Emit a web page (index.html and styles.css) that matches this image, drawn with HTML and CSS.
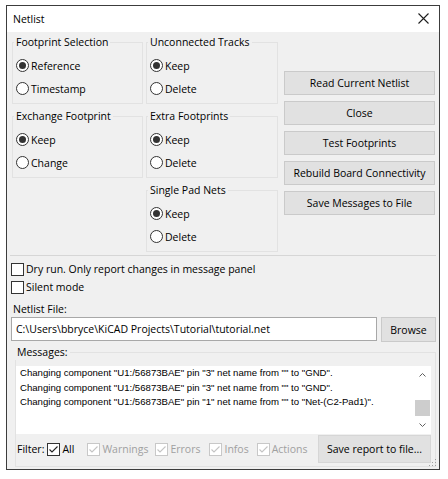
FILE: index.html
```html
<!DOCTYPE html>
<html>
<head>
<meta charset="utf-8">
<title>Netlist</title>
<link rel="stylesheet" href="styles.css">
</head>
<body>
<div class="window">
  <div class="titlebar">
    <span class="title">Netlist</span>
    <svg class="close" width="11" height="11" viewBox="0 0 11 11"><path d="M0.5 0.5L10.5 10.5M10.5 0.5L0.5 10.5" stroke="#1e1e1e" stroke-width="1.1" fill="none"/></svg>
  </div>
  <div class="content">
    <div class="top">
      <div class="col col1">
        <fieldset class="group">
          <legend>Footprint Selection</legend>
          <div class="radio on"><span class="dot"></span>Reference</div>
          <div class="radio"><span class="dot"></span>Timestamp</div>
        </fieldset>
        <fieldset class="group">
          <legend>Exchange Footprint</legend>
          <div class="radio on"><span class="dot"></span>Keep</div>
          <div class="radio"><span class="dot"></span>Change</div>
        </fieldset>
      </div>
      <div class="col col2">
        <fieldset class="group">
          <legend>Unconnected Tracks</legend>
          <div class="radio on"><span class="dot"></span>Keep</div>
          <div class="radio"><span class="dot"></span>Delete</div>
        </fieldset>
        <fieldset class="group">
          <legend>Extra Footprints</legend>
          <div class="radio on"><span class="dot"></span>Keep</div>
          <div class="radio"><span class="dot"></span>Delete</div>
        </fieldset>
        <fieldset class="group">
          <legend>Single Pad Nets</legend>
          <div class="radio on"><span class="dot"></span>Keep</div>
          <div class="radio"><span class="dot"></span>Delete</div>
        </fieldset>
      </div>
      <div class="buttons">
        <div class="btn">Read Current Netlist</div>
        <div class="btn">Close</div>
        <div class="btn">Test Footprints</div>
        <div class="btn">Rebuild Board Connectivity</div>
        <div class="btn">Save Messages to File</div>
      </div>
    </div>
    <div class="sep"></div>
    <div class="checks">
      <div class="check"><span class="box"></span>Dry run. Only report changes in message panel</div>
      <div class="check"><span class="box"></span>Silent mode</div>
    </div>
    <div class="file-label">Netlist File:</div>
    <div class="file-row">
      <div class="input">C:\Users\bbryce\KiCAD Projects\Tutorial\tutorial.net</div>
      <div class="btn browse">Browse</div>
    </div>
    <fieldset class="group messages">
      <legend>Messages:</legend>
      <div class="list">
        <div class="lines">
          <div>Changing component "U1:/56873BAE" pin "3" net name from "" to "GND".</div>
          <div>Changing component "U1:/56873BAE" pin "3" net name from "" to "GND".</div>
          <div>Changing component "U1:/56873BAE" pin "1" net name from "" to "Net-(C2-Pad1)".</div>
        </div>
        <div class="scrollbar">
          <svg class="arrow" width="7" height="4" viewBox="0 0 7 4"><path d="M0.5 3.5L3.5 0.5L6.5 3.5" stroke="#606060" fill="none"/></svg>
          <div class="track"><div class="thumb"></div></div>
          <svg class="arrow" width="7" height="4" viewBox="0 0 7 4"><path d="M0.5 0.5L3.5 3.5L6.5 0.5" stroke="#606060" fill="none"/></svg>
        </div>
      </div>
      <div class="filter-row">
        <span class="filter-label">Filter:</span>
        <span class="fcheck f-all"><span class="cbox"><svg width="11" height="11" viewBox="0 0 11 11"><path d="M1.5 5.5L4 8L9.5 2.5" stroke="#222" stroke-width="1.1" fill="none"/></svg></span>All</span>
        <span class="fcheck disabled f-warn"><span class="cbox"><svg width="11" height="11" viewBox="0 0 11 11"><path d="M1.5 5.5L4 8L9.5 2.5" stroke="#c4c4c4" stroke-width="1.1" fill="none"/></svg></span>Warnings</span>
        <span class="fcheck disabled f-err"><span class="cbox"><svg width="11" height="11" viewBox="0 0 11 11"><path d="M1.5 5.5L4 8L9.5 2.5" stroke="#c4c4c4" stroke-width="1.1" fill="none"/></svg></span>Errors</span>
        <span class="fcheck disabled f-info"><span class="cbox"><svg width="11" height="11" viewBox="0 0 11 11"><path d="M1.5 5.5L4 8L9.5 2.5" stroke="#c4c4c4" stroke-width="1.1" fill="none"/></svg></span>Infos</span>
        <span class="fcheck disabled f-act"><span class="cbox"><svg width="11" height="11" viewBox="0 0 11 11"><path d="M1.5 5.5L4 8L9.5 2.5" stroke="#c4c4c4" stroke-width="1.1" fill="none"/></svg></span>Actions</span>
        <div class="btn save">Save report to file...</div>
      </div>
    </fieldset>
  </div>
  <svg class="grip" width="8" height="8" viewBox="0 0 8 8">
    <rect x="6" y="0" width="1" height="1" fill="#a0a0a0"/>
    <rect x="6" y="3" width="1" height="1" fill="#a0a0a0"/>
    <rect x="3" y="3" width="1" height="1" fill="#a0a0a0"/>
    <rect x="6" y="6" width="1" height="1" fill="#a0a0a0"/>
    <rect x="3" y="6" width="1" height="1" fill="#a0a0a0"/>
    <rect x="0" y="6" width="1" height="1" fill="#a0a0a0"/>
  </svg>
</div>
</body>
</html>
```

FILE: styles.css
```css
* { box-sizing: border-box; }

body {
  margin: 0;
  background: #ffffff;
  font-family: "Open Sans", "Noto Sans", sans-serif;
  font-size: 10.5px;
  color: #000;
}

.window {
  position: relative;
  margin: 5px 0 0 6px;
  width: 434px;
  height: 465px;
  border: 1px solid #3c3c3c;
  background: #f0f0f0;
  display: flex;
  flex-direction: column;
}

.titlebar {
  height: 26px;
  flex: none;
  background: #ffffff;
  display: flex;
  align-items: center;
  justify-content: space-between;
  padding: 0 10px 1px 6px;
  font-size: 10.5px;
}

.content {
  flex: 1;
  display: flex;
  flex-direction: column;
  padding: 2px 3px 0 3px;
}

.top {
  display: flex;
  margin: 0 1px 0 2px;
}

.col {
  display: flex;
  flex-direction: column;
  gap: 4px;
}

.col1 { width: 131px; }
.col2 { width: 132px; margin-left: 3px; }

fieldset.group {
  margin: 0;
  min-width: 0;
  border: 1px solid #e2e2e2;
  padding: 4px 0 3px 1px;
}

fieldset.group legend {
  padding: 0 2px;
  line-height: 16px;
}

.radio {
  height: 23px;
  display: flex;
  align-items: center;
  padding-left: 2px;
}

.dot {
  position: relative;
  width: 13px;
  height: 13px;
  border: 1px solid #333;
  border-radius: 50%;
  background: #fff;
  margin-right: 2px;
}

.radio.on .dot::after {
  content: "";
  position: absolute;
  left: 2px;
  top: 2px;
  width: 7px;
  height: 7px;
  border-radius: 50%;
  background: #333;
}

.buttons {
  width: 151px;
  margin-left: 6px;
  padding-top: 37px;
  display: flex;
  flex-direction: column;
  gap: 6px;
}

.btn {
  height: 24px;
  background: #e1e1e1;
  border: 1px solid #cacaca;
  display: flex;
  align-items: center;
  justify-content: center;
  white-space: nowrap;
}

.sep {
  height: 1px;
  background: #d6d6d6;
  margin-top: 3px;
}

.checks {
  margin-top: 4px;
  padding-left: 1px;
}

.check {
  height: 18px;
  display: flex;
  align-items: center;
}

.box {
  width: 13px;
  height: 13px;
  border: 1px solid #333;
  background: #fff;
  margin-right: 2px;
}

.file-label {
  margin-top: 5px;
  padding-left: 3px;
  line-height: 16px;
}

.file-row {
  display: flex;
  padding-left: 1px;
  gap: 4px;
}

.input {
  width: 366px;
  height: 24px;
  background: #fff;
  border: 1px solid #a8a8a8;
  padding-left: 4px;
  display: flex;
  align-items: center;
}

.browse {
  flex: 1;
  height: 25px;
}

.messages {
  margin: 2px 0 0 5px !important;
  padding: 6px 4px 3px 0 !important;
}

.messages legend {
  margin-left: -1px;
}

.list {
  height: 68px;
  background: #fff;
  display: flex;
  padding-right: 1px;
}

.lines {
  flex: 1;
  padding: 0 0 0 4px;
  font-family: "Liberation Sans", Arial, sans-serif;
  font-size: 9.6px;
  line-height: 14.5px;
}

.scrollbar {
  width: 15px;
  display: flex;
  flex-direction: column;
  align-items: center;
}

.scrollbar .arrow {
  margin: 7px 0;
}

.track {
  flex: 1;
  width: 100%;
  display: flex;
  flex-direction: column;
  justify-content: flex-end;
}

.thumb {
  height: 16px;
  background: #cdcdcd;
}

.filter-row {
  display: flex;
  align-items: center;
  margin-top: 1px;
  padding-left: 1px;
}

.fcheck {
  display: flex;
  align-items: center;
}

.cbox {
  width: 13px;
  height: 13px;
  border: 1px solid #333;
  background: #fff;
  margin-right: 2px;
  display: flex;
}

.fcheck.disabled { color: #a0a0a0; }
.fcheck.disabled .cbox { border-color: #c8c8c8; }

.f-all { margin-left: 3px; }
.f-warn { margin-left: 13px; }
.f-err { margin-left: 7px; }
.f-info { margin-left: 9px; }
.f-act { margin-left: 8px; }

.save {
  margin-left: auto;
  width: 113px;
  height: 28px;
  border-color: #d6d6d6;
}

.grip {
  position: absolute;
  right: 2px;
  bottom: 2px;
}
```
